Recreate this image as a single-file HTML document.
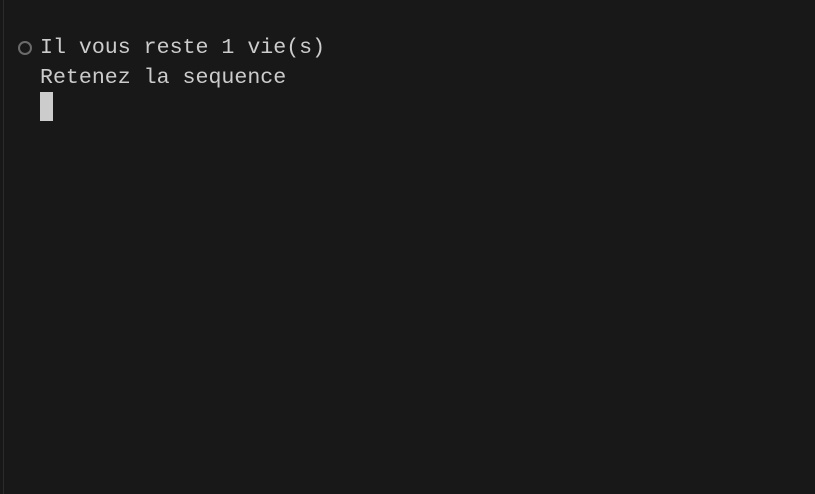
<html><head><style>
body{margin:0;width:815px;height:494px;background:#181818;overflow:hidden;position:relative}
.l{position:absolute;left:3px;top:0;width:1px;height:494px;background:#2b2b2b}
.t{position:absolute;left:40px;font-family:"Liberation Mono",monospace;font-size:21.6px;color:#cccccc;white-space:pre;line-height:30px}
.c{position:absolute;left:18px;top:41px;width:10px;height:10px;border:2px solid #6b6b6b;border-radius:50%}
.cur{position:absolute;left:40px;top:92px;width:13px;height:29px;background:#cccccc}
</style></head><body>
<div class="l"></div>
<div class="c"></div>
<div class="t" style="top:33px">Il vous reste 1 vie(s)</div>
<div class="t" style="top:63px">Retenez la sequence</div>
<div class="cur"></div>
</body></html>
